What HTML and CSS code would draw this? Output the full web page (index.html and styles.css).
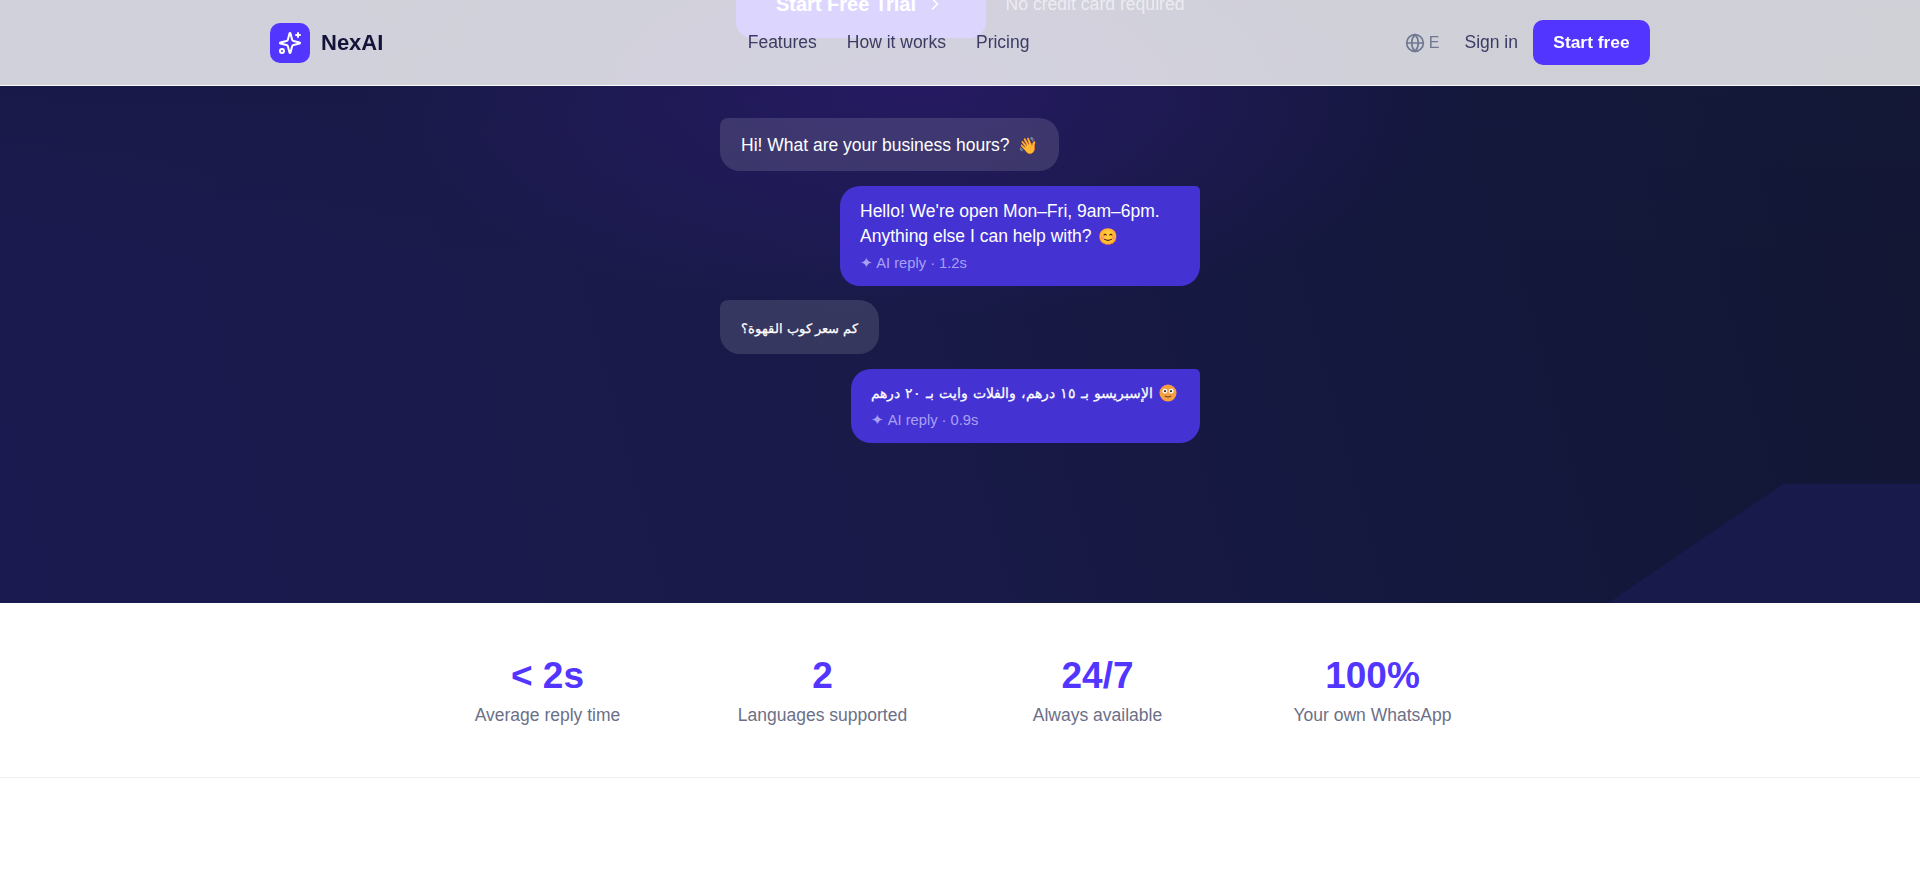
FILE: index.html
```html
<!DOCTYPE html>
<html lang="en">
<head>
  <meta charset="UTF-8" />
  <meta name="viewport" content="width=device-width, initial-scale=1.0"/>
  <title>NexAI</title>
  <link rel="stylesheet" href="styles.css">
</head>
<body>
  <!-- Header sits over the hero -->
  <header class="site-header">
    <div class="header-inner">
      <a class="brand" href="#">
        <span class="brand-icon">
          <svg viewBox="0 0 24 24" width="24" height="24" fill="none" stroke="#fff" stroke-width="2" stroke-linecap="round" stroke-linejoin="round">
            <path d="M9.937 15.5A2 2 0 0 0 8.5 14.063l-6.135-1.582a.5.5 0 0 1 0-.962L8.5 9.936A2 2 0 0 0 9.937 8.5l1.582-6.135a.5.5 0 0 1 .963 0L14.063 8.5A2 2 0 0 0 15.5 9.937l6.135 1.581a.5.5 0 0 1 0 .964L15.5 14.063a2 2 0 0 0-1.437 1.437l-1.582 6.135a.5.5 0 0 1-.963 0z"/>
            <path d="M20 2v4"/>
            <path d="M22 4h-4"/>
            <circle cx="4" cy="20" r="2"/>
          </svg>
        </span>
        <span class="brand-name">NexAI</span>
      </a>
      <nav class="main-nav">
        <a href="#">Features</a>
        <a href="#">How it works</a>
        <a href="#">Pricing</a>
      </nav>
      <div class="header-actions">
        <button class="lang-btn">
          <svg viewBox="0 0 24 24" width="20" height="20" fill="none" stroke="currentColor" stroke-width="2" stroke-linecap="round" stroke-linejoin="round">
            <circle cx="12" cy="12" r="10"/>
            <path d="M12 2a14.5 14.5 0 0 0 0 20 14.5 14.5 0 0 0 0-20"/>
            <path d="M2 12h20"/>
          </svg>
          <span>E</span>
        </button>
        <a class="sign-in" href="#">Sign in</a>
        <a class="start-free" href="#">Start free</a>
      </div>
    </div>
  </header>

  <section class="hero">
    <div class="hero-cta">
      <a class="trial-btn" href="#">
        <span>Start Free Trial</span>
        <svg viewBox="0 0 24 24" width="20" height="20" fill="none" stroke="currentColor" stroke-width="2" stroke-linecap="round" stroke-linejoin="round">
          <path d="m9 18 6-6-6-6"/>
        </svg>
      </a>
      <span class="no-card">No credit card required</span>
    </div>

    <div class="chat">
      <div class="bubble bubble-user">Hi! What are your business hours? <span class="emoji">👋</span></div>
      <div class="bubble bubble-ai">
        <p>Hello! We're open Mon–Fri, 9am–6pm. Anything else I can help with? <span class="emoji">😊</span></p>
        <p class="reply-meta">✦ AI reply · 1.2s</p>
      </div>
      <div class="bubble bubble-user"><span class="arabic">كم سعر كوب القهوة؟</span></div>
      <div class="bubble bubble-ai">
        <p class="with-face"><span class="arabic">الإسبريسو بـ ١٥ درهم، والفلات وايت بـ ٢٠ درهم</span>
          <svg class="face" viewBox="0 0 20 20" width="18" height="18">
            <circle cx="10" cy="10" r="9.5" fill="#f4a043"/>
            <circle cx="6.5" cy="8" r="2.6" fill="#fff"/>
            <circle cx="13.5" cy="8" r="2.6" fill="#fff"/>
            <circle cx="6.7" cy="8" r="1.2" fill="#3a2a20"/>
            <circle cx="13.3" cy="8" r="1.2" fill="#3a2a20"/>
            <path d="M7 13.5q3 2 6 0" fill="none" stroke="#6b3a1a" stroke-width="1.2" stroke-linecap="round"/>
          </svg>
        </p>
        <p class="reply-meta">✦ AI reply · 0.9s</p>
      </div>
    </div>

    <div class="hero-shape"></div>
  </section>

  <section class="stats">
    <div class="stats-grid">
      <div class="stat">
        <div class="stat-value">&lt; 2s</div>
        <div class="stat-label">Average reply time</div>
      </div>
      <div class="stat">
        <div class="stat-value">2</div>
        <div class="stat-label">Languages supported</div>
      </div>
      <div class="stat">
        <div class="stat-value">24/7</div>
        <div class="stat-label">Always available</div>
      </div>
      <div class="stat">
        <div class="stat-value">100%</div>
        <div class="stat-label">Your own WhatsApp</div>
      </div>
    </div>
  </section>
</body>
</html>
```

FILE: styles.css
```css
* {
  margin: 0;
  padding: 0;
  box-sizing: border-box;
}

body {
  background: #fff;
  font-family: "Liberation Sans", sans-serif;
  min-height: 877px;
  overflow: hidden;
}

a {
  text-decoration: none;
  color: inherit;
}

.site-header {
  position: fixed;
  top: 0;
  left: 0;
  right: 0;
  z-index: 10;
  height: 86px;
  background: rgba(255, 255, 255, 0.8);
  border-bottom: 1px solid rgba(255, 255, 255, 0.9);
}

.header-inner {
  max-width: 1380px;
  height: 85px;
  margin: 0 auto;
  display: flex;
  align-items: center;
  justify-content: space-between;
}

.brand {
  display: flex;
  align-items: center;
  gap: 11px;
}

.brand-icon {
  width: 40px;
  height: 40px;
  border-radius: 10px;
  background: #5236ff;
  display: flex;
  align-items: center;
  justify-content: center;
}

.brand-name {
  font-size: 22px;
  font-weight: 700;
  color: #14143a;
}

.main-nav {
  display: flex;
  gap: 30px;
  margin-left: 2px;
  font-size: 17.5px;
  color: #3b3b66;
}

.header-actions {
  display: flex;
  align-items: center;
  gap: 15px;
}

.lang-btn {
  display: flex;
  align-items: center;
  gap: 4px;
  padding: 6px 10px 6px 13px;
  border: none;
  background: none;
  font-family: inherit;
  font-size: 16px;
  color: #6f7890;
}

.sign-in {
  font-size: 17.5px;
  color: #3b3b66;
}

.start-free {
  width: 117px;
  height: 45px;
  border-radius: 10px;
  background: #5236ff;
  color: #fff;
  font-size: 17.4px;
  font-weight: 700;
  display: flex;
  align-items: center;
  justify-content: center;
}

.hero {
  position: relative;
  height: 603px;
  overflow: hidden;
  background:
    radial-gradient(ellipse 560px 230px at 48% 86px, rgba(62, 28, 150, 0.38), transparent),
    linear-gradient(180deg, rgba(20, 24, 60, 0.45), transparent 45%),
    linear-gradient(75deg, #1b1a50 0%, #191a48 45%, #13173a 78%, #131733 100%);
}

.hero-cta {
  display: flex;
  align-items: center;
  justify-content: center;
  gap: 20px;
  margin-top: -30px;
  height: 68px;
}

.trial-btn {
  width: 250px;
  height: 68px;
  border-radius: 16px;
  background: #5236ff;
  color: #fff;
  font-size: 20px;
  font-weight: 700;
  display: flex;
  align-items: center;
  justify-content: center;
  gap: 9px;
}

.no-card {
  font-size: 17.6px;
  color: rgba(255, 255, 255, 0.6);
}

.chat {
  position: relative;
  z-index: 1;
  width: 480px;
  margin: 80px auto 0;
  display: flex;
  flex-direction: column;
  align-items: flex-start;
  gap: 14.5px;
  font-size: 17.5px;
  line-height: 25px;
  color: #fff;
}

.bubble {
  max-width: 360px;
  border-radius: 20px;
}

.bubble-user {
  padding: 15px 21px 13px;
  background: rgba(255, 255, 255, 0.13);
  border-top-left-radius: 8px;
}

.bubble-ai {
  align-self: flex-end;
  padding: 13px 20px 12px;
  background: #4433d2;
  border-top-right-radius: 5px;
}

.emoji {
  margin-left: 4px;
  font-size: 16px;
  filter: hue-rotate(-18deg) saturate(1.1);
}

.bubble-ai .emoji {
  margin-left: 2px;
}

.arabic {
  font-size: 13px;
  -webkit-text-stroke: 0.25px #fff;
}

.with-face {
  display: flex;
  align-items: center;
  gap: 6px;
  margin-top: -1px;
  margin-bottom: 1px;
}

.with-face .arabic {
  font-size: 14.2px;
  word-spacing: 1px;
}

.face {
  margin-right: 3px;
}

.reply-meta {
  margin-top: 3px;
  font-size: 14.7px;
  line-height: 22px;
  color: #a9a0f5;
}

.hero-shape {
  position: absolute;
  right: 0;
  bottom: 0;
  width: 312px;
  height: 119px;
  background: #191a4c;
  clip-path: polygon(175px 0, 100% 0, 100% 100%, 0 100%);
}

.stats {
  height: 175px;
  padding-top: 51px;
  border-bottom: 1px solid #f1f1f4;
  background: #fff;
}

.stats-grid {
  width: 1100px;
  margin: 0 auto;
  display: grid;
  grid-template-columns: repeat(4, 1fr);
  text-align: center;
}

.stat-value {
  font-size: 37px;
  font-weight: 700;
  line-height: 1.2;
  color: #5236ff;
}

.stat-label {
  margin-top: 7px;
  font-size: 17.5px;
  color: #6b7088;
}
```
